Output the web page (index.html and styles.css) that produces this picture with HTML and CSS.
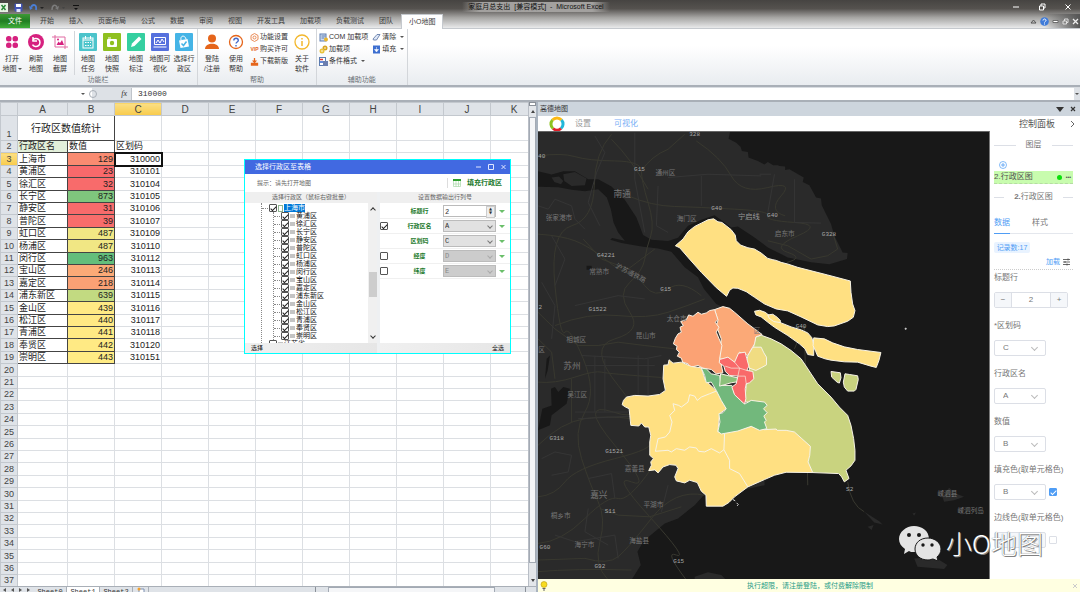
FILE: index.html
```
<!DOCTYPE html>
<html lang="zh-CN">
<head>
  <meta charset="UTF-8"/>
  <meta name="viewport" content="width=device-width, initial-scale=1.0"/>
  <title>家庭月总支出 [兼容模式] - Microsoft Excel</title>
  <link rel="stylesheet" href="styles.css">
</head>
<body>
  <!-- Title bar and ribbon tabs -->
  <header class="window-head">
    <div class="title-row">
      <div class="quick-access">
        <svg width="8" height="9" viewBox="0 0 8 9"><rect width="8" height="9" fill="#e8f3e4"/><path d="M1.500 2l4 5M5.500 2l-4 5" stroke="#2d8a3a" stroke-width="1.500"/></svg>
        <svg width="9" height="9" viewBox="0 0 9 9"><rect x=".5" y=".5" width="8" height="8" rx="1" fill="#4355b5"/><rect x="2" y="1" width="5" height="3" fill="#fff"/><rect x="2.500" y="6" width="4" height="3" fill="#dfe4fa"/></svg>
        <svg width="16" height="9" viewBox="0 0 16 9"><path d="M2 4c2-3 6-3 5 3" fill="none" stroke="#4b7fd6" stroke-width="1.800"/><path d="M0 3l1 4 3-2z" fill="#4b7fd6"/><path d="M11 4h4l-2 2z" fill="#222"/></svg>
        <svg width="16" height="9" viewBox="0 0 16 9"><path d="M6 4c-2-3-5-2-5 3" fill="none" stroke="#7c7c7c" stroke-width="1.500"/><path d="M8 3l-1 4-3-2z" fill="#7c7c7c"/><path d="M11 4h3l-1.500 2z" fill="#444"/></svg>
        <svg width="6" height="9" viewBox="0 0 6 9"><path d="M0 2.500h6" stroke="#111"/><path d="M1 5h4l-2 2z" fill="#111"/></svg>
      </div>
      <div class="window-title">家庭月总支出&nbsp; [兼容模式] &nbsp;-&nbsp; Microsoft Excel</div>
      <div class="window-buttons">
        <svg width="8" height="8" viewBox="0 0 8 8"><path d="M1 4h6" stroke="#fff"/></svg>
        <svg width="8" height="8" viewBox="0 0 8 8"><path d="M1.500 3h4v4h-4zM3 3V1h4v4H5.500" stroke="#fff" fill="none"/></svg>
        <svg width="8" height="8" viewBox="0 0 8 8"><path d="M1.500 1.500l5 5M6.500 1.500l-5 5" stroke="#fff"/></svg>
      </div>
    </div>
    <nav class="tabs">
      <button class="tab file">文件</button>
      <button class="tab">开始</button>
      <button class="tab">插入</button>
      <button class="tab">页面布局</button>
      <button class="tab">公式</button>
      <button class="tab">数据</button>
      <button class="tab">审阅</button>
      <button class="tab">视图</button>
      <button class="tab">开发工具</button>
      <button class="tab">加载项</button>
      <button class="tab">负载测试</button>
      <button class="tab">团队</button>
      <button class="tab active">小O地图</button>
      <div class="tab-tools">
        <svg width="7" height="7" viewBox="0 0 7 7"><path d="M1 5l2.500-3L6 5z" fill="none" stroke="#555"/></svg>
        <svg width="9" height="9" viewBox="0 0 9 9"><circle cx="4.500" cy="4.500" r="4.300" fill="#3f7bd9"/><path d="M3 3.500c0-2 3-2 3 0 0 1-1.500 1-1.500 2M4.500 6.500v1" fill="none" stroke="#fff"/></svg>
        <svg width="7" height="7" viewBox="0 0 7 7"><path d="M1 2.500h5v2H1z" fill="#fff" stroke="#555" stroke-width=".8"/></svg>
        <svg width="7" height="7" viewBox="0 0 7 7"><path d="M1 3h3.500v3H1zM2.500 3V1H6v3.500H4.500" fill="none" stroke="#ddd"/></svg>
        <svg width="7" height="7" viewBox="0 0 7 7"><path d="M1 1l5 5M6 1L1 6" stroke="#eee" stroke-width="1.300"/></svg>
      </div>
    </nav>
  </header>

  <!-- Ribbon -->
  <section class="ribbon">
    <div class="group">
      <div class="group-body">
        <button class="big"><svg viewBox="0 0 18 18"><g fill="#d6217f"><rect x="3" y="3" width="5.500" height="5.500" rx="2.500"/><rect x="9.500" y="3" width="5.500" height="5.500" rx="2.500"/><rect x="3" y="9.500" width="5.500" height="5.500" rx="2.500"/><rect x="9.500" y="9.500" width="5.500" height="5.500" rx="2.500"/></g></svg>打开<br>地图<i class="caret"></i></button>
        <button class="big"><svg viewBox="0 0 18 18"><circle cx="9" cy="9" r="8" fill="#d6217f"/><path d="M5.500 7.500a4 4 0 1 1 0 4M6 4v4h4" fill="none" stroke="#fff" stroke-width="1.500"/></svg>刷新<br>地图</button>
        <button class="big"><svg viewBox="0 0 18 18"><path d="M4 2v12h13M1 4h13v12" fill="none" stroke="#e06aa2"/><path d="M5.500 12l2-3.500 1.500 1.500 2-3 2 5z" fill="#d6217f"/><circle cx="7" cy="6.500" r="1" fill="#d6217f"/></svg>地图<br>截屏</button>
      </div>
      <div class="group-body split">
        <button class="big"><svg viewBox="0 0 18 18"><rect width="18" height="18" rx="1" fill="#4cc4cb"/><rect x="4" y="5" width="10" height="10" fill="none" stroke="#fff"/><path d="M4 7h10M6.500 3v3M11.500 3v3" stroke="#fff"/><path d="M6 9.500h6M6 12.500h6" stroke="#fff" stroke-dasharray="1.500 1"/></svg>地图<br>任务</button>
        <button class="big"><svg viewBox="0 0 18 18"><rect width="18" height="18" rx="1" fill="#8fc01f"/><rect x="4" y="6" width="10" height="8" rx="1" fill="#fff"/><path d="M5 5h3" stroke="#fff"/><circle cx="9" cy="10" r="2.200" fill="#8fc01f"/></svg>地图<br>快照</button>
        <button class="big"><svg viewBox="0 0 18 18"><rect width="18" height="18" rx="1" fill="#35cfa0"/><path d="M4 14l1-3.500L12 3.500l2.500 2.500-7 7z" fill="#fff"/></svg>地图<br>标注</button>
        <button class="big"><svg viewBox="0 0 18 18"><rect width="18" height="18" rx="1" fill="#5570dd"/><path d="M3.500 4.500h11v7h-11zM2.500 14h13" fill="none" stroke="#fff"/><path d="M5 10l2-3 2 3 2-4 2 3" fill="none" stroke="#fff"/></svg>地图可<br>视化</button>
        <button class="big"><svg viewBox="0 0 18 18"><rect width="18" height="18" rx="1" fill="#45b4e6"/><path d="M4 7.500l8.500-1.500 1.500 7.500-8.500 1.500z" fill="#fff"/><path d="M6 7c-1-5 4-5 5-1" fill="none" stroke="#fff"/><path d="M6.500 10.500l2 2 3-4" fill="none" stroke="#45b4e6" stroke-width="1.500"/></svg>选择行<br>政区</button>
      </div>
      <div class="group-name">功能栏</div>
    </div>
    <div class="group help">
      <div class="group-body">
        <button class="big"><svg viewBox="0 0 18 18"><circle cx="9" cy="5.500" r="4" fill="#e5651b"/><path d="M2 16c0-7 14-7 14 0z" fill="#e5651b"/></svg>登陆<br>/注册</button>
        <button class="big"><svg viewBox="0 0 18 18"><circle cx="9" cy="9" r="6.500" fill="none" stroke="#e5651b" stroke-width="1.300"/><path d="M6.800 7.500c0-3 4.500-3 4.500 0 0 1.500-2.200 1.500-2.200 3M9 12v1.500" fill="none" stroke="#4569c8" stroke-width="1.400"/></svg>使用<br>帮助</button>
        <div class="small-list">
          <button class="small"><svg viewBox="0 0 9 9"><path d="M4.500.5l3.500 2v4l-3.500 2-3.500-2v-4z" fill="none" stroke="#e98a55"/><circle cx="4.500" cy="4.500" r="1.500" fill="none" stroke="#e98a55"/></svg>功能设置</button>
          <button class="small"><b class="vip">VIP</b>购买许可</button>
          <button class="small"><svg viewBox="0 0 9 9"><path d="M4.500 1v3M1.500 6.500h6v1.500h-6z" stroke="#e5651b" stroke-width="1.300" fill="none"/><path d="M2 3.500h5l-2.500 3z" fill="#e5651b"/></svg>下载新版</button>
        </div>
        <button class="big"><svg viewBox="0 0 18 18"><circle cx="9" cy="9" r="7" fill="none" stroke="#f3b72c" stroke-width="1.300"/><path d="M9 8v5M9 5v1.500" stroke="#f3b72c" stroke-width="1.500"/></svg>关于<br>软件</button>
      </div>
      <div class="group-name">帮助</div>
    </div>
    <div class="group">
      <div class="group-body">
        <div class="small-list">
          <button class="small"><svg viewBox="0 0 9 9"><rect x="1" y="1" width="6" height="7" fill="#cfdcf0" stroke="#5c7cb0"/><path d="M2.500 3h4M2.500 5h3" stroke="#5c7cb0"/><circle cx="7" cy="6.500" r="2" fill="#e9b62c"/></svg>COM 加载项</button>
          <button class="small"><svg viewBox="0 0 9 9"><circle cx="6" cy="3" r="2.500" fill="#d8a520"/><circle cx="3" cy="6" r="2.500" fill="#e9c23c"/><circle cx="6" cy="3" r=".8" fill="#fff"/><circle cx="3" cy="6" r=".8" fill="#fff"/></svg>加载项</button>
          <button class="small"><svg viewBox="0 0 9 9"><rect x=".5" y=".5" width="6" height="8" fill="#fff" stroke="#5c7cb0"/><path d="M1 2.500h3" stroke="#d33" stroke-width="1.500"/><path d="M1 5h5" stroke="#36c" stroke-width="1.500"/><rect x="4" y="4" width="5" height="5" fill="#6c7fb0"/></svg>条件格式<i class="caret"></i></button>
        </div>
        <div class="small-list">
          <button class="small"><svg viewBox="0 0 9 9"><path d="M1 6l4-4.500h3L4.500 7H1.500z" fill="#dfe8f8" stroke="#5570a0" stroke-width=".8"/></svg>清除<i class="caret"></i></button>
          <button class="small"><svg viewBox="0 0 9 9"><rect x="1" y=".5" width="7" height="8" fill="#3d6fd0"/><path d="M4.500 2v3M2.500 4.500h4l-2 2.500z" fill="#fff" stroke="#fff" stroke-width=".5"/></svg>填充<i class="caret"></i></button>
        </div>
      </div>
      <div class="group-name">辅助功能</div>
    </div>
  </section>

  <!-- Name box and formula bar -->
  <section class="formula-bar">
    <input class="name-box" aria-label="名称框">
    <div class="fx"><i class="caret"></i><span class="knob"></span><em>fx</em></div>
    <input class="formula" value="310000" aria-label="编辑栏">
    <button class="expand" aria-label="展开"><i class="caret"></i></button>
  </section>

  <main class="workspace">
    <section class="sheet-area">
      <div class="sheet-view">
        <div class="sheet-clip">
          <table class="sheet">
            <colgroup><col class="c-num"><col class="c-name"><col><col><col><col><col><col><col><col><col><col></colgroup>
            <thead id="sheetHead"></thead>
            <tbody id="sheetBody"></tbody>
          </table>
        </div>
        <div class="vscroll"><i class="split-box"></i><i class="arrow up"></i><i class="thumb"></i><i class="arrow down"></i></div>
      </div>
      <footer class="sheet-tabs">
        <span class="nav-arrows"><i></i><i></i><i></i><i></i></span>
        <button>Sheet0</button>
        <button class="active">Sheet1</button>
        <button>Sheet2</button>
        <button class="new-sheet" aria-label="新建工作表"><svg width="8" height="6" viewBox="0 0 8 6"><path d="M2 2h5v4H2z" fill="#fff" stroke="#7d8fb0"/><circle cx="2" cy="2" r="1.500" fill="#f0a030"/></svg></button>
        <div class="hscroll"><i class="thumb"></i></div>
      </footer>
    </section>

    <!-- Map task pane -->
    <section class="pane">
      <div class="pane-head"><span>高德地图</span><i class="menu-caret"></i><svg width="6" height="6" viewBox="0 0 6 6"><path d="M1 1l4 4M5 1L1 5" stroke="#333" stroke-width="1.200"/></svg></div>
      <div class="pane-tools">
        <svg class="logo" width="16" height="16" viewBox="0 0 16 16" fill="none" stroke-width="3"><path d="M3.500 4A6 6 0 0 1 12.500 4" stroke="#fdb913"/><path d="M12.500 4A6 6 0 0 1 12 12.500" stroke="#22b7d8"/><path d="M12 12.500A6 6 0 0 1 4 12.500" stroke="#e0202a"/><path d="M4 12.500A6 6 0 0 1 3.500 4" stroke="#8cc220"/></svg>
        <a href="#">设置</a>
        <a href="#" class="on">可视化</a>
        <h2>控制面板</h2>
        <svg class="next" width="6" height="8" viewBox="0 0 6 8"><path d="M1 1l3 3-3 3" fill="none" stroke="#666"/></svg>
      </div>
      <div class="pane-body">
        <svg class="map" viewBox="9 18 1356 1344" preserveAspectRatio="xMidYMid slice">
          <rect x="-600" y="-600" width="3000" height="3000" fill="#181818"/>
          <!-- land -->
          <g fill="#2a2a2a">
            <path d="M0 0H590L582 38 605 50 618 62 622 75 640 78 642 95 670 105 690 116 700 108 716 118 730 118 735 120 752 122 752 132 765 130 808 155 805 168 825 178 845 215 860 218 862 238 890 295 900 330 925 380 940 382 938 400 885 416 830 410 760 395 700 365 660 335 610 302 590 305 540 268 500 282 460 300 430 336 400 346 350 342 325 328 305 275 270 222 230 182 190 160 160 160 120 136 85 136 50 146 0 134Z"/>
            <path d="M0 182L70 184 110 192 150 196 190 190 216 215 228 250 236 290 250 320 270 345 232 337 226 342 260 352 320 362 370 368 410 378 450 425 490 455 508 490 545 535 600 560 690 640 690 1080 600 1100 512 1105 480 1140 430 1180 390 1195 350 1228 325 1250 308 1280 318 1320 290 1365H0Z"/>
            <path d="M50 155L72 152 85 165 78 175 58 168ZM85 145L120 138 155 158 150 178 110 180 88 165Z"/>
            <path d="M480 1355L520 1342 560 1350 580 1370H480ZM990 1160L1035 1188 1045 1198 1020 1192ZM1000 1205L1018 1200 1012 1215ZM1225 1115L1245 1088 1265 1105 1290 1115 1260 1125 1230 1130ZM1135 1165L1145 1162 1140 1172ZM1140 1300L1200 1295 1240 1320 1230 1332 1150 1325Z"/>
          </g>
          <path d="M9 915L22 850 50 840 48 790 60 785 70 800 85 785 105 790 95 835 50 870 45 900ZM35 700L45 690 38 735 30 760ZM155 420H170L172 432H155Z" fill="#181818"/>
          <!-- roads -->
          <g fill="none" stroke="#38382f" stroke-width="3">
            <path d="M9 90Q80 80 120 92T240 105 320 135 340 230 348 330 330 400 285 470 285 560 240 640 250 780 235 860 240 960 290 1070 345 1175 425 1290 455 1365"/>
            <path d="M230 25Q180 80 178 180T110 300 60 480 90 620 145 700 150 860 140 1000 190 1130 195 1250 220 1365"/>
            <path d="M9 325Q80 330 120 345T210 400 280 440 330 480 400 490 500 510"/>
            <path d="M485 45Q560 95 590 150T700 185 740 210 752 270"/>
            <path d="M280 210Q350 240 420 242T600 250 700 270 780 290 790 330 760 380 758 410"/>
            <path d="M320 135Q350 90 400 70L450 25"/>
            <path d="M230 40Q290 100 340 190"/>
            <path d="M9 770Q60 775 120 755T200 740 380 756"/>
            <path d="M9 960Q80 890 150 880T290 880"/>
            <path d="M9 1115Q60 1110 90 1070T240 1000 345 950"/>
            <path d="M9 1255Q80 1250 150 1180T250 1120 350 1030"/>
            <path d="M9 1305L150 1300Q220 1320 250 1295T350 1180 510 1110"/>
            <path d="M195 1150L250 1170 345 1175 440 1145"/>
            <path d="M9 560L60 610 130 660 190 660 250 650 330 660 420 670"/>
            <path d="M60 600Q160 560 250 570T400 560 510 520"/>
            <path d="M145 340L200 400 280 430 360 370"/>
            <path d="M700 345L760 360 830 400 880 390 910 370 895 320"/>
            <path d="M820 1080L810 600 780 670"/>
            <path d="M940 1070Q950 1140 990 1160"/>
            <path d="M9 640L50 680 60 760M110 760V890M9 1340Q120 1330 290 1335"/>
          </g>
          <g fill="none" stroke="#353535" stroke-width="3">
            <path d="M180 30L210 80 185 140 160 230 195 300M300 20V160L330 320M370 180L365 300 400 320M500 150V240M400 155L520 145 680 150"/>
            <path d="M9 240L40 250 60 220 110 240 120 280 150 310M50 330L90 400 60 480M120 540L250 510 330 520M20 470L60 540 50 640"/>
            <path d="M140 690L330 700 380 690M150 720H360M310 690V850M340 700V830M180 690V860M210 700V860M130 880L340 870M120 860H280"/>
            <path d="M20 1000L60 980 110 990 100 1040 50 1050M160 1060L230 1045 240 1120M160 1150L150 1220 220 1260M60 1230L120 1250 240 1230 250 1300M400 1080L380 1160"/>
            <path d="M720 145L700 260M780 160V290L860 292M675 145H710"/>
          </g>
          <!-- districts -->
          <g stroke="#f7f3e6" stroke-width="3" stroke-linejoin="round">
            <path fill="#ffe082" d="M422 360L445 340 460 318 480 302 500 292 520 282 537 279 550 288 562 290 575 300 590 312 602 328 605 345 618 358 640 366 660 370 680 382 700 398 715 402 725 404 740 410 760 415 790 425 880 448 948 466 950 500 955 535 962 555 957 575 940 587 900 601 880 603 850 598 800 574 760 556 725 550 690 535 660 515 635 498 610 488 595 487 585 494 576 512 545 486 500 440 460 395 435 366Z"/>
            <path fill="#ffe082" d="M660 557L675 554 692 560 715 578 740 592 770 604 800 613 820 622 832 636 838 655 838 690 820 687 812 670 795 655 760 630 720 605 700 590 680 574 664 568Z"/>
            <path fill="#ffe082" d="M700 568L715 566 728 575 738 585 737 591 718 588 704 578Z"/>
            <path fill="#ffe082" d="M838 637L870 640 895 652 930 664 970 672 1040 681 1034 705 1026 726 1010 722 970 710 930 709 890 704 872 700 850 692 844 678 836 660Z"/>
            <path fill="#c9d37f" d="M660 650L664 634 680 629 710 640 740 655 770 675 800 700 815 722 830 745 850 775 890 815 915 845 940 870 950 900 958 940 962 975 962 1005 950 1022 935 1035 944 1060 930 1070 922 1055 913 1045 835 1042 675 930 640 830 630 830 635 780Z"/>
            <path fill="#c9d37f" d="M890 738L918 742 920 757 915 773 908 770 892 755ZM932 745L945 747 970 751 972 762 965 792 960 797 940 797 930 785 927 770Z"/>
            <path fill="#fba977" d="M540 552L565 543 585 548 600 560 640 595 683 627 664 634 660 655 640 690 615 680 605 712 580 705 555 700 560 640 545 600 550 585Z"/>
            <path fill="#fba274" d="M540 552L525 555 515 562 500 566 490 560 475 572 462 568 455 582 438 588 446 600 436 605 440 620 430 625 422 638 416 655 427 662 425 672 434 680 428 692 440 698 444 710 460 715 465 726 490 720 505 728 530 732 545 745 565 742 560 718 555 700 562 660 545 620 553 605 542 590 550 582Z"/>
            <path fill="#f0dc82" d="M640 690L655 665 680 665 688 682 696 695 696 718 680 727 664 735 645 728 636 710Z"/>
            <path fill="#ffe082" d="M387 719L400 718 403 703 415 713 440 710 470 723 500 727 512 765 545 795 575 850 555 865 550 920 610 915 650 903 690 913 725 911 728 915 755 915 780 920 800 938 828 963 826 990 821 1010 835 1042 755 1041 720 1050 690 1063 640 1085 600 1115 583 1132 565 1143H515L514 1110 500 1098 488 1072 465 1065 450 1073 425 1067 420 1055 430 1030 424 1020 405 1018 385 1025 370 1043 360 1034 342 1036 350 1020 348 1010 356 1000 345 990V950L348 930 342 905 330 905 320 893 312 902 288 900 285 870 283 850 272 845 262 838 266 825 275 815 300 810 340 812 375 807 392 795 385 760Z"/>
            <path fill="none" d="M545 797L525 805 500 815 488 825 480 812 465 808 460 830 440 845 432 840 415 835 420 855 405 870 412 890 405 920 392 935 370 940 362 978 400 975 410 980 425 970 450 975 465 965 485 968 492 978 510 980 530 970 555 983 568 973 570 925M568 973L585 1005V1030L615 1045 640 1085"/>
            <path fill="#72b87c" d="M500 728L515 730 530 745 555 750 560 780 592 780 600 805 618 825 632 835 650 825 690 830 698 840 687 850 698 862 688 872 695 885 690 890 697 910 675 915 650 903 610 917 560 926 550 918 556 890 553 865 565 862 575 850 560 825 545 795 530 770 515 772 510 750Z"/>
            <path fill="#8cc07a" d="M558 745L608 757 615 768 590 772 555 782Z"/>
            <path fill="#f96a6a" d="M555 702L580 695 600 710 612 683 632 680 637 700 643 722 637 735 655 738 658 760 645 772 635 775 632 790 634 820 630 836 618 825 600 808 592 785 605 775 610 752 585 750 572 738 568 722 554 712Z"/>
            <path fill="none" stroke-width="2" d="M600 710L615 728 637 735M615 728L610 752 632 752 635 775M572 722L590 728 615 728"/>
          </g>
          <path d="M595 1123L602 1127M606 1133L611 1138 608 1142M1113 608H1116V611H1113Z" stroke="#ddd" stroke-width="3"/>
          <!-- place and road names -->
          <g class="road-label">
            <text x="480" y="31">328</text><text x="20" y="97">40</text><text x="314" y="134">G15</text><text x="546" y="253">G40</text>
            <text x="213" y="395">G4221</text><text x="393" y="497">G15</text><text x="188" y="556">G1522</text><text x="16" y="551">2</text>
            <text x="714" y="275">G40</text><text x="884" y="332">G328</text><text x="800" y="608">G40</text><text x="65" y="945">G318</text>
            <text x="238" y="982">G1521</text><text x="226" y="1163">S11</text><text x="30" y="1273">G60</text><text x="195" y="1328">G92</text>
            <text x="432" y="1315">G15</text><text x="946" y="1096">S2</text>
          </g>
          <g class="town-label">
            <text x="392" y="146">通州区</text><text x="456" y="287">海门区</text><text x="72" y="283">张家港市</text><text x="193" y="444">常熟市</text>
            <text x="426" y="585">太仓市</text><text x="333" y="638">昆山市</text><text x="124" y="649">相城区</text><text x="20" y="679">区</text>
            <text x="751" y="332">启东市</text><text x="127" y="816">吴江区</text><text x="300" y="1037">嘉善县</text><text x="356" y="1146">平湖市</text>
            <text x="77" y="1180">桐乡市</text><text x="313" y="1255">海盐县</text><text x="149" y="1265">海宁市</text><text x="1240" y="1111">嵊泗县</text>
            <text x="1310" y="1165">嵊泗列岛</text><text x="668" y="622">区</text>
            <text x="288" y="449" transform="rotate(28 288 442)">沪苏通铁路</text>
          </g>
          <g class="city-label">
            <text x="262" y="212">南通</text><text x="111" y="730">苏州</text><text x="192" y="1117">嘉兴</text><text class="rail" x="643" y="279">宁启线</text>
          </g>
        </svg>

        <!-- Control panel -->
        <form class="control">
          <div class="divider">图层</div>
          <button type="button" class="add" aria-label="添加"><svg width="8" height="8" viewBox="0 0 8 8"><path d="M4 2v4M2 4h4" stroke="#4f9df5" stroke-width=".8"/><circle cx="4" cy="4" r="3.500" fill="none" stroke="#4f9df5" stroke-width=".7"/></svg></button>
          <div class="layer"><span>2.行政区图</span><i></i><b>•••</b></div>
          <div class="divider layer-name"><span><b>2.</b>行政区图</span></div>
          <div class="panel-tabs"><a href="#" class="on">数据</a><a href="#">样式</a></div>
          <div class="count">记录数:17</div>
          <div class="load"><a href="#">加载</a><svg width="7" height="8" viewBox="0 0 7 8"><path d="M0 1.500h7M0 4h7M0 6.500h7M5 .5v2M2 3v2M4 5.500v2" stroke="#444" stroke-width=".8"/></svg></div>
          <div class="field">
            <label for="titleRow">标题行</label>
            <div class="stepper"><button type="button">−</button><input id="titleRow" value="2"><button type="button">+</button></div>
          </div>
          <div class="field"><label for="code">*区划码</label><div class="row"><span class="pick"><select id="code"><option>C</option></select></span></div></div>
          <div class="field"><label for="name">行政区名</label><div class="row"><span class="pick"><select id="name"><option>A</option></select></span></div></div>
          <div class="field"><label for="val">数值</label><div class="row"><span class="pick"><select id="val"><option>B</option></select></span></div></div>
          <div class="field"><label for="fill">填充色(取单元格色)</label><div class="row"><span class="pick"><select id="fill"><option>B</option></select></span><input type="checkbox" checked aria-label="启用填充色"></div></div>
          <div class="field"><label for="line">边线色(取单元格色)</label><div class="row"><span class="pick off"><select id="line" disabled><option></option></select></span><input type="checkbox" aria-label="启用边线色"></div></div>
        </form>
        <div class="watermark">
          <svg width="44" height="36" viewBox="0 0 44 36"><path d="M16 1c8 0 15 5 15 13S24 27 16 27c-2 0-4 0-5-1l-5 3 1-5C3 21 1 18 1 14 1 7 8 1 16 1z" fill="#e4e4e4"/><path d="M30 13c7 0 13 5 13 11 0 4-2 6-4 8l1 4-5-2c-1 0-3 1-5 1-8 0-13-5-13-11s5-11 13-11z" fill="#e4e4e4" stroke="#181818"/><g fill="#181818"><circle cx="11" cy="10" r="2"/><circle cx="21" cy="10" r="2"/><circle cx="25" cy="20" r="1.700"/><circle cx="34" cy="20" r="1.700"/></g></svg>
          <span>小O地图</span>
        </div>
      </div>
      <div class="pane-status">
        <svg width="8" height="10" viewBox="0 0 8 10"><circle cx="4" cy="3.500" r="3" fill="#f8dc1e" stroke="#b89a10" stroke-width=".6"/><path d="M2.500 7.500h3M3 9h2" stroke="#666" stroke-width="1.200"/></svg>
        <span>执行超限，请注册登陆，或付费解除限制</span>
        <svg width="6" height="6" viewBox="0 0 6 6"><path d="M1 1l4 4M5 1L1 5" stroke="#ccc"/></svg>
      </div>
    </section>
  </main>

  <!-- Region picker window -->
  <section class="dialog">
    <div class="dialog-title"><span>选择行政区至表格</span>
      <svg width="34" height="8" viewBox="0 0 34 8" fill="none" stroke="#dfe6ff"><path d="M2 4h5M14.500 1.500h5v5h-5zM27.500 2l4 4M31.500 2l-4 4"/></svg>
    </div>
    <div class="dialog-hint"><span>提示：请先打开地图</span>
      <button><svg width="8" height="8" viewBox="0 0 8 8"><path d="M0 0h8v2H0z" fill="#2fa02f"/><path d="M.5 2v5.500h7V2M3 2v5.500M5.500 2v5.500M.5 5h7" stroke="#a9d8a9" fill="none" stroke-width=".7"/></svg>填充行政区</button>
    </div>
    <div class="dialog-body">
      <div class="dialog-left">
        <h3>选择行政区（鼠标右键批量）</h3>
        <div class="tree-box">
          <ul class="tree" id="tree"></ul>
          <div class="tree-scroll"><i class="chev up"></i><i class="thumb"></i><i class="chev down"></i></div>
        </div>
        <footer>选择</footer>
      </div>
      <div class="dialog-right">
        <h3>设置数据输出行列号</h3>
        <div class="outputs">
          <div class="output"><i></i><label for="o1">标题行</label><span class="box spin"><input id="o1" value="2"></span><i class="go"></i></div>
          <div class="output"><input type="checkbox" checked aria-label="行政区名"><label for="o2">行政区名</label><span class="box"><select id="o2"><option>A</option></select></span><i class="go"></i></div>
          <div class="output"><i></i><label for="o3">区划码</label><span class="box"><select id="o3"><option>C</option></select></span><i class="go"></i></div>
          <div class="output"><input type="checkbox" aria-label="经度"><label for="o4">经度</label><span class="box off"><select id="o4" disabled><option>D</option></select></span><i class="go"></i></div>
          <div class="output"><input type="checkbox" aria-label="纬度"><label for="o5">纬度</label><span class="box off"><select id="o5" disabled><option>E</option></select></span><i class="go"></i></div>
        </div>
        <footer>全选</footer>
      </div>
    </div>
  </section>

  <script src="script.js"></script>
</body>
</html>
```
FILE: styles.css
```
:root {
  --line: #dcdfe3;
  --head: #dfe3e8;
  --blue: #4f9df5;
  --green: #1c7a2c;
}
* {
  box-sizing: border-box;
}
body {
  margin: 0;
  height: 100vh;
  display: flex;
  flex-direction: column;
  overflow: hidden;
  font: 7px/10px "Liberation Sans", "Noto Sans CJK SC", sans-serif;
  color: #333;
  background: #fff;
}
button, input, select {
  font: inherit;
  color: inherit;
  padding: 0;
  margin: 0;
  border: 0;
  background: none;
  border-radius: 0;
  appearance: none;
  min-width: 0;
}
svg {
  flex-shrink: 0;
}
a {
  color: inherit;
  text-decoration: none;
}
h2, h3 {
  margin: 0;
  font: inherit;
}
.caret {
  display: inline-block;
  border: 2px solid transparent;
  border-top-color: #555;
  border-bottom: 0;
  margin-left: 3px;
  vertical-align: middle;
}

/* Title bar */
.window-head {
  background: linear-gradient(#464442, #55524f 30%, #a5a4a2 60%, #e6e7e8 95%);
}
.title-row {
  display: flex;
  justify-content: space-between;
  height: 14px;
  align-items: center;
}
.quick-access,
.window-buttons {
  display: flex;
  flex: 1;
  gap: 6px;
  align-items: center;
}
.window-buttons {
  justify-content: flex-end;
  gap: 18px;
  padding-right: 8px;
}
.window-title {
  padding: 0 6px;
  color: #111;
  background: linear-gradient(90deg, transparent, #a3a19f 12%, #a3a19f 88%, transparent);
}
.tabs {
  display: flex;
  gap: 1px;
  height: 15px;
  border-bottom: 1px solid #c5c9ce;
}
.tab {
  padding: 0 7px;
  color: #3b3b3b;
}
.tab.file {
  width: 30px;
  margin-right: 2px;
  color: #fff;
  background: linear-gradient(#3f9a35, #1f7d22 50%, #3fae39);
}
.tab.active {
  height: 15px;
  border: 1px solid #c5c9ce;
  border-bottom: 0;
  background: #fff;
}
.tab-tools {
  margin-left: auto;
  display: flex;
  gap: 3px;
  align-items: center;
  padding: 0 1px 0 40px;
  background: linear-gradient(90deg, transparent 60%, #555);
}

/* Ribbon */
.ribbon {
  display: flex;
  height: 58px;
  background: linear-gradient(#fff 30%, #e9ecf0);
  border-bottom: 2px solid #a9afb7;
}
.group {
  display: grid;
  grid-template-columns: auto auto;
  align-content: start;
  padding: 2px 1px 0 0;
  border-right: 1px solid #d3d6da;
}
.group.help {
  padding: 2px 2px 0 2px;
}
.group-body {
  display: flex;
  height: 44px;
}
.group-body.split {
  border-left: 1px solid #d3d6da;
  margin-left: 2px;
  padding-left: 1px;
}
.group-name {
  grid-column: 1 / -1;
  text-align: center;
  color: #6a6f76;
}
.big {
  width: 24px;
  display: block;
  text-align: center;
  white-space: nowrap;
}
.big svg {
  display: block;
  width: 18px;
  height: 18px;
  margin: 0 auto 3px;
}
.big .caret {
  margin-left: 1px;
}
.small-list {
  display: flex;
  flex-direction: column;
  padding: 0 2px;
}
.small {
  display: flex;
  align-items: center;
  height: 12px;
  gap: 1px;
  white-space: nowrap;
}
.small svg {
  width: 9px;
  height: 9px;
}
.vip {
  width: 9px;
  color: #e5651b;
  font-size: 5px;
}

/* Formula bar */
.formula-bar {
  display: flex;
  height: 15px;
  border-bottom: 2px solid #a9afb7;
  border-top: 1px solid #d8dce1;
}
.name-box {
  width: 80px;
}
.fx {
  width: 52px;
  display: flex;
  align-items: center;
  justify-content: space-between;
  padding-right: 4px;
  background: linear-gradient(90deg, #fff 12px, #dde1e6 12px);
  border-right: 1px solid #bfc4ca;
  font: 8px/10px "Liberation Serif", serif;
}
.fx .caret {
  margin: 0 4px 0 1px;
}
.knob {
  width: 8px;
  height: 8px;
  border: 1px solid #a9afb7;
  border-radius: 4px;
  margin-right: auto;
}
.formula {
  flex: 1;
  padding-left: 6px;
  font: 8px/12px "Liberation Mono", monospace;
}
.expand {
  width: 6px;
  background: #dde1e6;
}
.expand .caret {
  margin: 0;
}

/* Worksheet */
.workspace {
  flex: 1;
  min-height: 0;
  display: grid;
  grid-template-columns: minmax(0, 67fr) minmax(0, 68fr);
  grid-template-rows: minmax(0, 1fr);
}
.sheet-area {
  display: flex;
  flex-direction: column;
  min-height: 0;
}
.sheet-view {
  flex: 1;
  min-height: 0;
  display: flex;
}
.sheet-clip {
  flex: 1;
  overflow: hidden;
}
.sheet {
  table-layout: fixed;
  width: 537px;
  border-collapse: collapse;
  font-size: 9px;
  line-height: 11px;
}
.sheet col {
  width: 47px;
}
.sheet .c-num {
  width: 17px;
}
.sheet .c-name {
  width: 50px;
}
.sheet th {
  padding: 0;
  font-weight: normal;
  color: #444;
  background: var(--head);
  border: 1px solid #c3c8ce;
  vertical-align: bottom;
}
.sheet td {
  height: 12px;
  padding: 0 1px;
  border: 1px solid var(--line);
  white-space: nowrap;
  color: #222;
}
.sheet thead th {
  height: 13px;
  font-size: 10px;
}
.sheet th.sel {
  background: linear-gradient(#fbdf86, #f8cb4a);
}
.sheet tbody tr:nth-child(5n+3) td,
.sheet tbody tr:nth-child(5n+5) td {
  height: 13px;
}
.sheet tbody tr:first-child td {
  height: 25px;
}
.sheet td.edge {
  border-color: #444;
}
.sheet td.title {
  text-align: center;
  font-size: 10px;
}
.sheet td.green {
  background: #e2efda;
}
.sheet td.num {
  text-align: right;
}
.sheet td.cursor {
  outline: 2px solid #111;
  outline-offset: -1px;
}
.vscroll {
  width: 8px;
  display: flex;
  flex-direction: column;
  align-items: center;
  background: #e3e6ea;
  border-left: 1px solid #b9bec6;
}
.split-box {
  width: 7px;
  height: 4px;
  border: 1px solid #8a9098;
  background: #fff;
}
.arrow {
  margin: 4px 0;
  border: 2px solid transparent;
}
.arrow.up {
  border-bottom: 3px solid #444;
  border-top: 0;
}
.arrow.down {
  border-top: 3px solid #444;
  border-bottom: 0;
  margin-top: 16px;
}
.vscroll .thumb {
  flex: 1;
  width: 7px;
  border: 1px solid #a3aab4;
  background: #f5f6f8;
}
.sheet-tabs {
  display: flex;
  height: 6px;
  overflow: hidden;
  background: var(--head);
  border-top: 1px solid #a9afb7;
  font: 7px/9px "Liberation Mono", monospace;
}
.nav-arrows {
  display: flex;
  gap: 5px;
  width: 34px;
  padding: 1px 0 0 3px;
}
.nav-arrows i {
  border: 2px solid transparent;
  border-right: 3px solid #555;
  border-left: 0;
}
.nav-arrows i:nth-child(n+3) {
  border-left: 3px solid #555;
  border-right: 0;
}
.sheet-tabs button {
  width: 33px;
  height: 10px;
  border-right: 1px solid #a9afb7;
}
.sheet-tabs .active {
  background: #fff;
}
.sheet-tabs .new-sheet {
  width: 16px;
}
.new-sheet svg {
  display: block;
  margin: 0 auto 4px;
}
.hscroll {
  flex: 1;
  margin: 0 10px 0 166px;
  padding: 0 30px 0 12px;
  border: 1px solid #8a9098;
  border-width: 0 1px;
}
.hscroll .thumb {
  display: block;
  height: 8px;
  border: 1px solid #a3aab4;
  background: #f5f6f8;
}

/* Map pane */
.pane {
  display: flex;
  flex-direction: column;
  min-height: 0;
  border-left: 2px solid #a9b3bf;
}
.pane-head {
  display: flex;
  align-items: center;
  height: 14px;
  padding: 0 4px 0 2px;
  gap: 6px;
  background: #cdd5dd;
}
.pane-head span {
  flex: 1;
}
.menu-caret {
  border: 4px solid transparent;
  border-top: 5px solid #333;
  border-bottom: 0;
}
.pane-tools {
  display: flex;
  align-items: center;
  height: 15px;
  padding: 0 4px 0 11px;
  font-size: 8px;
  color: #999;
}
.pane-tools a {
  margin-left: 10px;
}
.pane-tools a.on {
  margin-left: 23px;
  color: #78aef5;
}
.pane-tools h2 {
  margin-left: auto;
  font-size: 9px;
  color: #555;
}
.next {
  margin-left: 15px;
}
.pane-body {
  flex: 1;
  min-height: 0;
  display: flex;
  position: relative;
}
.map {
  flex: 1;
  min-width: 0;
  height: 100%;
  text-anchor: middle;
  border-top: 1px solid #666;
}
.road-label {
  font: 18px "Liberation Mono", monospace;
  fill: #a8a8a8;
}
.town-label {
  font-size: 20px;
  fill: #777;
}
.city-label {
  font-size: 26px;
  fill: #777;
}
.city-label .rail {
  font-size: 22px;
  fill: #999;
}

/* Control panel */
.control {
  width: 91px;
  padding: 8px 7px 0 4px;
  border-left: 1px solid #777;
  font-size: 8px;
  line-height: 12px;
  color: #777;
  overflow: hidden;
}
.divider {
  display: flex;
  align-items: center;
  gap: 10px;
  white-space: nowrap;
}
.divider::before,
.divider::after {
  content: "";
  flex: 1;
  height: 1px;
  background: #dcdfe6;
}
.add {
  display: block;
  height: 8px;
  margin: 10px 0 2px 5px;
}
.add svg {
  display: block;
}
.layer {
  display: flex;
  align-items: center;
  height: 13px;
  background: #c8fcae;
  color: #555;
  border-bottom: 1px dashed #b5dca3;
}
.layer span {
  flex: 1;
}
.layer i {
  width: 5px;
  height: 5px;
  border-radius: 3px;
  background: #0be00b;
}
.layer b {
  font-size: 5px;
  margin: 0 2px 0 4px;
}
.layer-name {
  margin-top: 7px;
}
.panel-tabs {
  display: flex;
  gap: 22px;
  height: 17px;
  margin-top: 14px;
  border-bottom: 1px solid #e4e7ed;
}
.panel-tabs .on {
  height: 17px;
  color: var(--blue);
  border-bottom: 1px solid var(--blue);
}
.count {
  width: 36px;
  height: 11px;
  margin: 8px 0 2px;
  line-height: 11px;
  font-size: 7px;
  text-align: center;
  color: var(--blue);
  background: #e9f3ff;
  border-radius: 2px;
}
.load {
  display: flex;
  align-items: center;
  justify-content: flex-end;
  gap: 3px;
  height: 15px;
  padding-right: 3px;
  margin-bottom: 2px;
  font-size: 7px;
  color: var(--blue);
  border-bottom: 1px dotted #ccc;
}
.field {
  height: 48px;
}
.field label {
  display: block;
  white-space: nowrap;
  margin-bottom: 8px;
}
.field .row {
  display: flex;
  align-items: center;
  gap: 3px;
}
.stepper {
  display: flex;
  width: 74px;
  height: 16px;
  border: 1px solid #dcdfe6;
  border-radius: 2px;
}
.stepper button {
  width: 16px;
  background: #f5f7fa;
}
.stepper input {
  flex: 1;
  text-align: center;
  border: 1px solid #dcdfe6;
  border-width: 0 1px;
}
.pick {
  display: grid;
  width: 52px;
  height: 16px;
  border: 1px solid #dcdfe6;
  border-radius: 2px;
}
.pick.off {
  background: #f5f7fa;
}
.pick select {
  grid-area: 1 / 1;
  padding-left: 8px;
}
.pick::after {
  content: "";
  grid-area: 1 / 1;
  justify-self: end;
  align-self: center;
  width: 4px;
  height: 4px;
  margin: 0 8px 2px 0;
  border: 1px solid #bbb;
  border-width: 0 1px 1px 0;
  rotate: 45deg;
}
input[type="checkbox"] {
  display: grid;
  place-items: center;
  width: 8px;
  height: 8px;
  flex-shrink: 0;
  border: 1px solid #dcdfe6;
  border-radius: 1px;
}
input[type="checkbox"]:checked::after {
  content: "";
  width: 2px;
  height: 5px;
  margin-top: -1px;
  border: 1px solid #fff;
  border-width: 0 1px 1px 0;
  rotate: 45deg;
}
.control input:checked {
  background: var(--blue);
  border-color: var(--blue);
}
.watermark {
  position: absolute;
  right: 37px;
  bottom: 18px;
  display: flex;
  align-items: center;
  gap: 4px;
  font: 300 26px/36px "Noto Sans CJK SC", sans-serif;
  color: #fff;
  text-shadow: 0 0 1px #555, 1px 1px 0 #888;
}
.pane-status {
  display: flex;
  align-items: center;
  justify-content: space-between;
  height: 13px;
  padding: 0 2px;
  color: #1e9b86;
  background: #ffffe1;
}

/* Region picker window */
.dialog {
  position: absolute;
  left: 244px;
  top: 159px;
  width: 267px;
  height: 195px;
  display: flex;
  flex-direction: column;
  border: 1px solid #0ff;
  background: #fff;
}
.dialog-title {
  display: flex;
  align-items: center;
  justify-content: space-between;
  height: 14px;
  padding: 0 2px 0 10px;
  color: #fff;
  background: #4169e1;
}
.dialog-hint {
  display: flex;
  align-items: center;
  justify-content: space-between;
  height: 18px;
  padding: 0 8px 0 12px;
  font-size: 6px;
  color: #666;
}
.dialog-hint button {
  display: flex;
  align-items: center;
  gap: 6px;
  padding-left: 5px;
  border-left: 1px solid #ddd;
  font-size: 7px;
  font-weight: bold;
  color: var(--green);
}
.dialog-body {
  flex: 1;
  min-height: 0;
  display: grid;
  grid-template-columns: 132px 1fr;
  gap: 3px;
  background: #eef0f2;
}
.dialog-left,
.dialog-right {
  display: flex;
  flex-direction: column;
  min-height: 0;
}
.dialog h3 {
  height: 11px;
  text-align: center;
  font-size: 6px;
  color: #666;
  background: #efefef;
}
.dialog footer {
  height: 10px;
  padding: 0 6px;
  font-size: 6px;
  color: #111;
  background: linear-gradient(90deg, #f0f0f0, #e6e6e6);
}
.dialog-right footer {
  text-align: right;
}
.tree-box {
  flex: 1;
  min-height: 0;
  display: flex;
  overflow: hidden;
  background: #fff;
}
.tree {
  flex: 1;
  margin: 0 0 0 16px;
  padding: 1px 0 0;
  list-style: none;
  line-height: 8px;
  color: #111;
  border-left: 1px dotted #888;
}
.tree ul {
  margin: 0 0 0 11px;
  padding: 0;
  list-style: none;
  border-left: 1px dotted #888;
}
.node {
  display: flex;
  align-items: center;
  gap: 1px;
  height: 8px;
}
.node::before {
  content: "";
  width: 6px;
  border-top: 1px dotted #888;
}
.node input {
  border-color: #555;
}
.node input:checked::after,
.output input:checked::after {
  border-color: #222;
}
.folder {
  width: 5px;
  height: 4px;
  background: #c4c4c4;
}
.root .folder {
  height: 7px;
  border: 1px solid #8fb58f;
  background: #fff;
}
.root .node-name {
  color: #fff;
  background: #0078d7;
}
.tree-scroll {
  display: flex;
  flex-direction: column;
  align-items: center;
  justify-content: space-between;
  width: 9px;
  padding: 5px 0;
  background: #f0f0f0;
}
.tree-scroll .thumb {
  width: 8px;
  height: 25px;
  margin-top: 22px;
  background: #cdcdcd;
}
.chev {
  width: 4px;
  height: 4px;
  border: 1px solid #333;
  border-width: 0 1px 1px 0;
  rotate: 45deg;
}
.chev.up {
  rotate: 225deg;
}
.outputs {
  flex: 1;
  padding-top: 1px;
  background: #fff;
}
.output {
  display: grid;
  grid-template-columns: 8px 49px 53px 1fr;
  align-items: center;
  column-gap: 3px;
  height: 15px;
  border-bottom: 1px solid #f0f0f0;
  font-size: 6px;
}
.output input[type="checkbox"] {
  border-color: #555;
}
.output label {
  text-align: center;
  padding-left: 8px;
  font-weight: bold;
  color: var(--green);
}
.box {
  display: grid;
  height: 12px;
  border: 1px solid #bbb;
  background: #e1e1e1;
  font: 7px/10px "Liberation Mono", monospace;
}
.box.off {
  background: #ccc;
  color: #888;
}
.box.spin {
  background: #fff;
}
.box input,
.box select {
  grid-area: 1 / 1;
  width: 100%;
  padding-left: 1px;
  opacity: 1;
}
.box::after {
  content: "";
  grid-area: 1 / 1;
  place-self: center end;
  width: 3px;
  height: 3px;
  margin: 0 3px 1px 0;
  border: 1px solid #777;
  border-width: 0 1px 1px 0;
  rotate: 45deg;
}
.box.off::after {
  border-color: #aaa;
}
.box.spin::after {
  content: "▲ ▼";
  width: 7px;
  height: 10px;
  margin: 0;
  border: 1px solid #ccc;
  background: #eee;
  font: 4px/4px "DejaVu Sans", sans-serif;
  text-align: center;
  rotate: none;
}
.go {
  width: 0;
  border: 3px solid transparent;
  border-top: 3px solid #6abf6a;
  border-bottom: 0;
}
```
FILE: script.js
```
// Worksheet contents: name, value, region code, value cell colour
const regions = [
  ["上海市", 129, 310000, "#f98b71"],
  ["黄浦区", 23, 310101, "#f8696b"],
  ["徐汇区", 32, 310104, "#f86b6b"],
  ["长宁区", 873, 310105, "#7fc67d"],
  ["静安区", 31, 310106, "#f86b6b"],
  ["普陀区", 39, 310107, "#f86d6b"],
  ["虹口区", 487, 310109, "#f1e784"],
  ["杨浦区", 487, 310110, "#f1e784"],
  ["闵行区", 963, 310112, "#63be7b"],
  ["宝山区", 246, 310113, "#fbaa77"],
  ["嘉定区", 218, 310114, "#faa175"],
  ["浦东新区", 639, 310115, "#c2da81"],
  ["金山区", 439, 310116, "#ffe984"],
  ["松江区", 440, 310117, "#ffe984"],
  ["青浦区", 441, 310118, "#ffea84"],
  ["奉贤区", 442, 310120, "#ffea84"],
  ["崇明区", 443, 310151, "#ffeb84"]
];
const columns = "ABCDEFGHIJK".split("");
const rowCount = 37;

// Column letters
document.getElementById("sheetHead").innerHTML = "<tr><th></th>" +
  columns.map(c => `<th class="${c === "C" ? "sel" : ""}">${c}</th>`).join("") + "</tr>";

const empty = n => "<td></td>".repeat(n);
let rows = "";
for (let i = 1; i <= rowCount; i++) {
  let cells = empty(11);
  if (i === 1) {
    cells = '<td class="title edge" colspan="2">行政区数值统计</td>' + empty(9);
  } else if (i === 2) {
    cells = '<td class="green edge">行政区名</td><td class="edge">数值</td><td>区划码</td>' + empty(8);
  } else if (regions[i - 3]) {
    const [name, value, code, color] = regions[i - 3];
    cells = `<td class="edge">${name}</td><td class="edge num" style="background:${color}">${value}</td>` +
      `<td class="num ${i === 3 ? "cursor" : ""}">${code}</td>` + empty(8);
  }
  rows += `<tr><th class="${i === 3 ? "sel" : ""}">${i}</th>${cells}</tr>`;
}
document.getElementById("sheetBody").innerHTML = rows;

// Region tree
function node(name, checked) {
  return `<label class="node"><input type="checkbox" ${checked ? "checked" : ""}>` +
    `<i class="folder"></i><span class="node-name">${name}</span></label>`;
}
document.getElementById("tree").innerHTML =
  `<li class="root">${node("上海市", true)}</li>` +
  `<li><ul>${regions.slice(1).map(r => `<li>${node(r[0], true)}</li>`).join("")}</ul></li>` +
  `<li>${node("江苏省", false)}</li>`;
```
